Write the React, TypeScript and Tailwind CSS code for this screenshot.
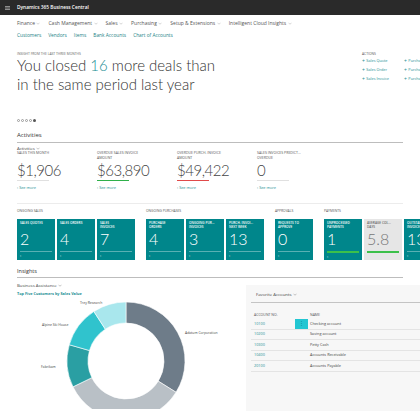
import React from 'react';

const Chevron = () => (
  <svg width="4" height="3" viewBox="0 0 8 5" className="ml-[1.5px] inline-block" fill="none" stroke="currentColor" strokeWidth="1">
    <path d="M1 1l3 3 3-3" />
  </svg>
);

const navMenus = ['Finance', 'Cash Management', 'Sales', 'Purchasing', 'Setup & Extensions', 'Intelligent Cloud Insights'];
const navLinks = ['Customers', 'Vendors', 'Items', 'Bank Accounts', 'Chart of Accounts'];

const kpis = [
  { label: ['SALES THIS MONTH'], value: '$1,906', bar: 'bg-[#e0e0e0]' },
  { label: ['OVERDUE SALES INVOICE', 'AMOUNT'], value: '$63,890', bar: 'bg-[#2fb04a]' },
  { label: ['OVERDUE PURCH. INVOICE', 'AMOUNT'], value: '$49,422', bar: 'bg-[#e04a4a]' },
  { label: ['SALES INVOICES PREDICT...', 'OVERDUE'], value: '0', bar: 'bg-[#e0e0e0]' },
];

type Tile = { title: string[]; value: string; light?: boolean; green?: boolean };
const tileGroups: { name: string; tiles: Tile[] }[] = [
  {
    name: 'ONGOING SALES',
    tiles: [
      { title: ['SALES QUOTES'], value: '2' },
      { title: ['SALES ORDERS'], value: '4' },
      { title: ['SALES', 'INVOICES'], value: '7' },
    ],
  },
  {
    name: 'ONGOING PURCHASES',
    tiles: [
      { title: ['PURCHASE', 'ORDERS'], value: '4' },
      { title: ['ONGOING PUR...', 'INVOICES'], value: '3' },
      { title: ['PURCH. INVOI...', 'NEXT WEEK'], value: '13' },
    ],
  },
  { name: 'APPROVALS', tiles: [{ title: ['REQUESTS TO', 'APPROVE'], value: '0' }] },
  {
    name: 'PAYMENTS',
    tiles: [
      { title: ['UNPROCESSED', 'PAYMENTS'], value: '1', green: true },
      { title: ['AVERAGE COL...', 'DAYS'], value: '5.8', light: true, green: true },
      { title: ['OUTSTANDI...', 'INVOICES'], value: '13' },
    ],
  },
];

const accounts = [
  ['10100', 'Checking account'],
  ['10200', 'Saving account'],
  ['10300', 'Petty Cash'],
  ['10400', 'Accounts Receivable'],
  ['20100', 'Accounts Payable'],
];

// donut segments: start/end angle in degrees clockwise from 12 o'clock
const segments = [
  { from: 0, to: 122, color: '#6e7c89' },
  { from: 122, to: 244, color: '#b9c0c6' },
  { from: 244, to: 286, color: '#2a9fa3' },
  { from: 286, to: 327, color: '#30c3cd' },
  { from: 327, to: 360, color: '#a9e7ed' },
];

function arc(cx: number, cy: number, ro: number, ri: number, a0: number, a1: number) {
  const p = (r: number, a: number) => {
    const t = ((a - 90) * Math.PI) / 180;
    return `${(cx + r * Math.cos(t)).toFixed(2)} ${(cy + r * Math.sin(t)).toFixed(2)}`;
  };
  const large = a1 - a0 > 180 ? 1 : 0;
  return `M${p(ro, a0)} A${ro} ${ro} 0 ${large} 1 ${p(ro, a1)} L${p(ri, a1)} A${ri} ${ri} 0 ${large} 0 ${p(ri, a0)} Z`;
}

export default function App() {
  return (
    <div className="h-[411px] w-[420px] overflow-hidden bg-white font-['Open_Sans',sans-serif] text-[#333]">
      {/* top bar */}
      <div className="flex h-[15px] items-center bg-[#2a2a2a] pl-[5px]">
        <svg width="5" height="4" viewBox="0 0 5 4" fill="#d0d0d0">
          <rect y="0" width="5" height="0.6" />
          <rect y="1.7" width="5" height="0.6" />
          <rect y="3.4" width="5" height="0.6" />
        </svg>
        <span className="ml-[7px] text-[4.8px] font-semibold text-white">Dynamics 365 Business Central</span>
      </div>

      <div className="px-[17px]">
        {/* nav */}
        <div className="mt-[5px] flex h-[8px] items-center gap-[8px] whitespace-nowrap text-[5px] text-[#555]">
          {navMenus.map((m) => (
            <span key={m} className="flex items-center">
              {m}
              <span className="text-[#aaa]"><Chevron /></span>
            </span>
          ))}
        </div>
        <div className="mt-[4px] flex h-[8px] items-center gap-[7px] whitespace-nowrap text-[4.8px] text-[#1b7f86]">
          {navLinks.map((l) => (
            <span key={l}>{l}</span>
          ))}
        </div>

        {/* insight header */}
        <div className="flex">
          <div className="w-[345px] shrink-0">
            <div className="mt-[11px] h-[5px] text-[3.3px] leading-[5px] text-[#666]">INSIGHT FROM THE LAST THREE MONTHS</div>
            <div className="font-['Lato',sans-serif] text-[15px] font-light leading-[19px] text-[#333]">
              You closed <span className="text-[#1b8e94]">16</span> more deals than
              <br />
              in the same period last year
            </div>
          </div>
          <div className="shrink-0 pt-[11px]">
            <div className="h-[5px] text-[3.3px] leading-[5px] text-[#555]">ACTIONS</div>
            <div className="mt-[2px] grid w-[90px] grid-cols-[42px_42px] gap-y-[3px] whitespace-nowrap text-[3.8px] leading-[6px] text-[#1b8e94]">
              {['Sales Quote', 'Purchase Quote', 'Sales Order', 'Purchase Order', 'Sales Invoice', 'Purchase Invoice'].map((a) => (
                <span key={a} className="flex items-center">
                  <span className="mr-[1.5px] text-[5px] leading-[6px]">+</span>
                  {a}
                </span>
              ))}
            </div>
          </div>
        </div>

        {/* dots */}
        <div className="mt-[24px] flex h-[4px] items-center gap-[1px]">
          {[0, 1, 2, 3].map((i) => (
            <span key={i} className="h-[3px] w-[3px] rounded-full border-[0.5px] border-[#999]" />
          ))}
          <span className="h-[3px] w-[3px] rounded-full bg-[#555]" />
        </div>

        {/* activities */}
        <div className="mt-[9px] border-b-[1.5px] border-[#bdbdbd] pb-[3px] text-[6px] leading-[8px] text-[#333]">Activities</div>
        <div className="mt-[2px] flex h-[6px] items-center text-[4.3px] text-[#444]">
          Activities
          <span className="text-[#888]"><Chevron /></span>
        </div>
        <div className="flex">
          {kpis.map((k) => (
            <div key={k.value} className="w-[80px] shrink-0">
              <div className="h-[10px] whitespace-nowrap text-[3.5px] leading-[4.6px] text-[#555]">
                {k.label.map((l) => (
                  <div key={l}>{l}</div>
                ))}
              </div>
              <div className="h-[18px] font-['Lato',sans-serif] text-[15px] font-light leading-[18px] tracking-[-0.03em] text-[#444]">{k.value}</div>
              <div className={`mt-[1px] h-[1px] w-[32px] ${k.bar}`} />
              <div className="mt-[4px] flex h-[5px] items-center text-[3.8px] text-[#1b8e94]">
                <span className="mr-[1px]">›</span>See more
              </div>
            </div>
          ))}
        </div>

        <div className="mt-[13px] h-px bg-[#ececec]" />

        {/* tiles */}
        <div className="mt-[4px] flex gap-[11px]">
          {tileGroups.map((g) => (
            <div key={g.name} className="shrink-0">
              <div className="h-[6px] text-[3.3px] leading-[6px] text-[#555]">{g.name}</div>
              <div className="mt-[5px] flex gap-[2px]">
                {g.tiles.map((t) => (
                  <div
                    key={t.title.join()}
                    className={`flex h-[41px] w-[38px] flex-col overflow-hidden px-[3px] pt-[3px] ${t.light ? 'bg-[#e6e6e6] text-[#666]' : 'bg-[#00868b] text-white'}`}
                  >
                    <div className="h-[8px] whitespace-nowrap text-[3.2px] font-semibold leading-[3.7px]">
                      {t.title.map((l) => (
                        <div key={l}>{l}</div>
                      ))}
                    </div>
                    <div className={`h-[17px] font-['Lato',sans-serif] text-[16px] font-light leading-[17px] ${t.light ? 'text-[#777]' : ''}`}>{t.value}</div>
                    <div className={`mt-[4px] w-full shrink-0 ${t.green ? 'h-[1.5px] bg-[#3cc04a]' : 'h-[1px] bg-white/35'}`} />
                    {!t.light && <div className="mt-[1px] text-[4px] leading-[5px]">›</div>}
                  </div>
                ))}
              </div>
            </div>
          ))}
        </div>

        {/* insights */}
        <div className="mt-[7px] border-b-[1.5px] border-[#bdbdbd] pb-[2px] text-[5.5px] leading-[8px] text-[#333]">Insights</div>
      </div>

      <div className="flex">
        <div className="w-[246px] shrink-0 pl-[17px]">
          <div className="mt-[4px] flex h-[6px] items-center text-[4.3px] text-[#444]">
            Business Assistance
            <span className="text-[#888]"><Chevron /></span>
          </div>
          <div className="mt-[3px] h-[6px] text-[3.8px] font-bold leading-[6px] text-[#1b8e94]">Top Five Customers by Sales Value</div>
          <svg width="229" height="112" viewBox="0 0 229 112" className="block">
            {segments.map((s) => (
              <path key={s.from} d={arc(109, 64, 59, 38, s.from, s.to)} fill={s.color} stroke="#fff" strokeWidth="0.6" />
            ))}
            <g fontSize="3.4" fill="#444" fontFamily="Open Sans, sans-serif">
              <text x="63" y="7">Trey Research</text>
              <text x="25" y="29">Alpine Ski House</text>
              <text x="24" y="71">Fabrikam</text>
              <text x="168" y="37">Adatum Corporation</text>
            </g>
          </svg>
        </div>

        <div className="mt-[7px] h-[140px] w-[180px] shrink-0 bg-[#f7f7f7] pl-[5px]">
          <div className="flex h-[18px] items-end border-b border-[#c4c4c4] pb-[5px] pl-[5px] text-[4.3px] text-[#444]">
            Favorite Accounts
            <span className="text-[#888]"><Chevron /></span>
          </div>
          <div className="mt-[8px] flex h-[8px] items-center text-[3.5px] text-[#555]">
            <span className="w-[59px] pl-[3px]">ACCOUNT NO.</span>
            <span>NAME</span>
          </div>
          {accounts.map(([no, name], i) => (
            <div key={no} className="flex h-[10.5px] items-center border-b border-[#e4e4e4] text-[3.8px]">
              <span className="w-[44px] pl-[3px] text-[#1b8e94]">{no}</span>
              <span className="flex w-[15px] items-center">
                {i === 0 && (
                  <span className="flex h-[10px] w-[13px] items-center justify-center bg-[#22c6d2] text-[5px] text-[#0b7f88]">⋮</span>
                )}
              </span>
              <span className="text-[#444]">{name}</span>
            </div>
          ))}
        </div>
      </div>
    </div>
  );
}
